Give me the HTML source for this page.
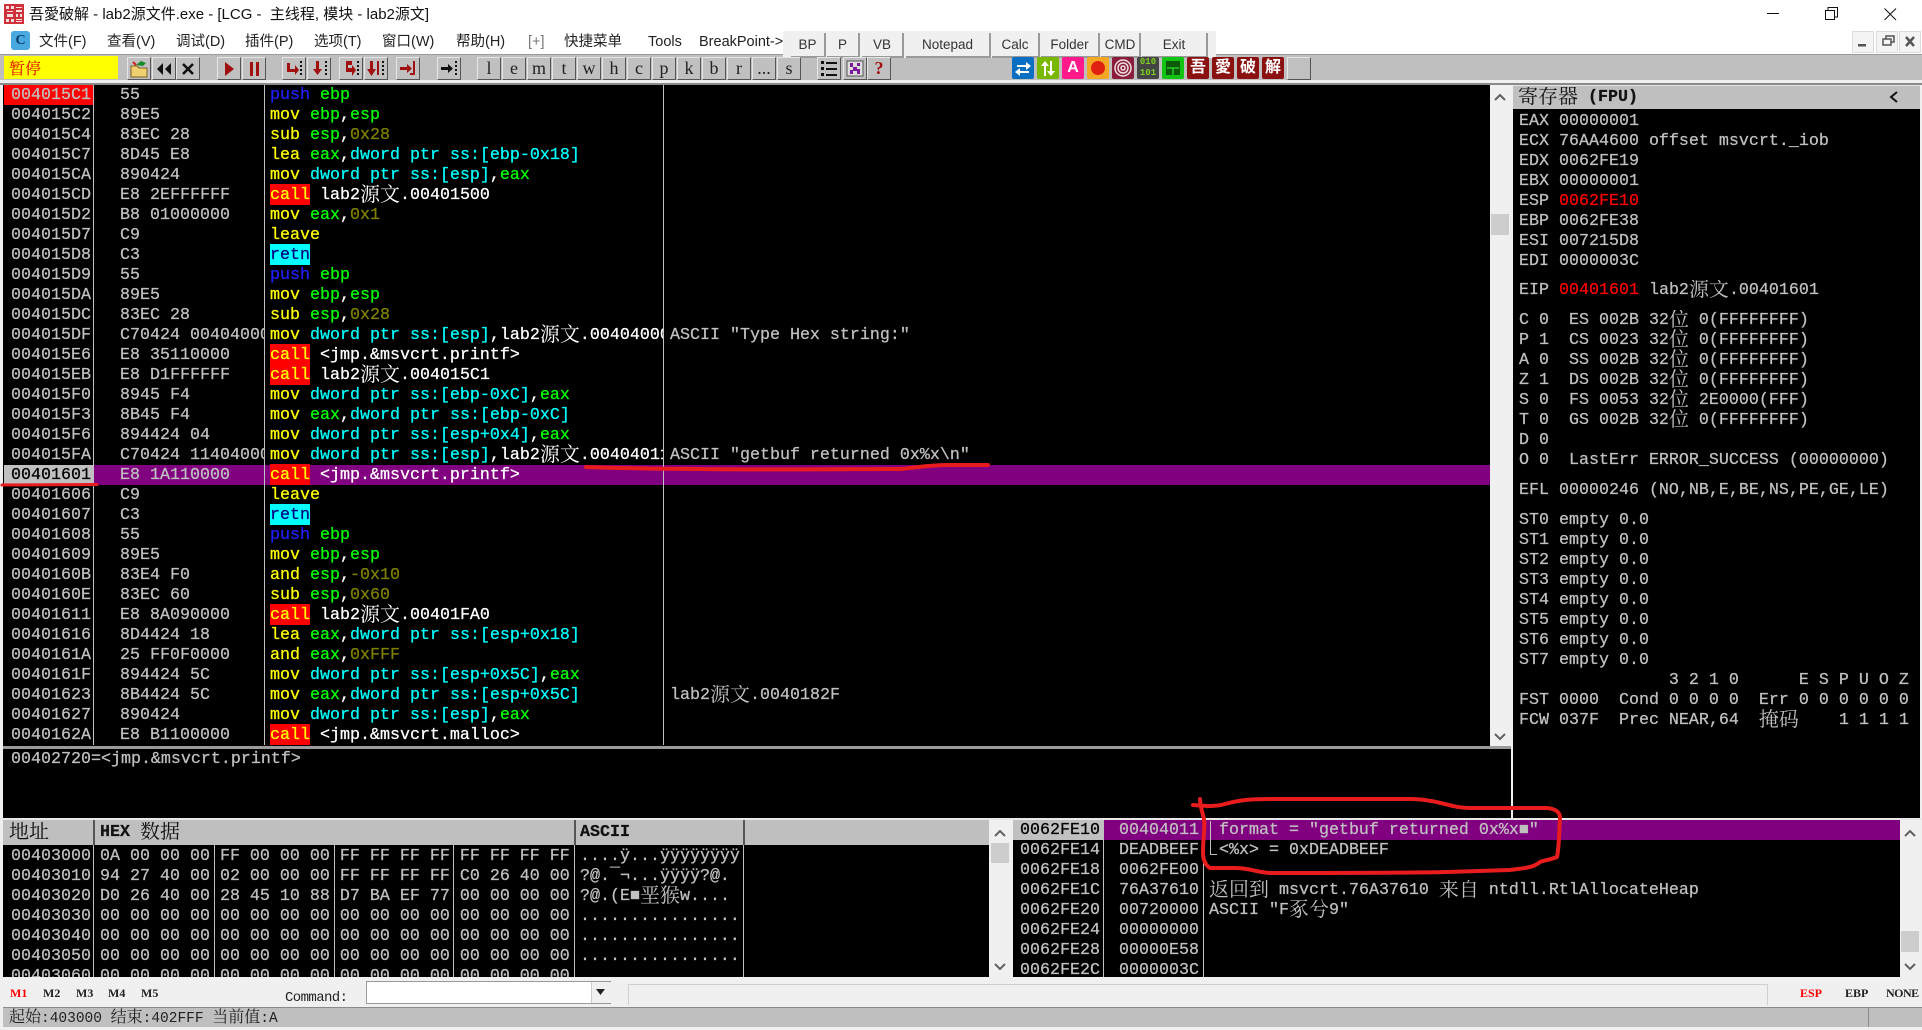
<!DOCTYPE html>
<html>
<head>
<meta charset="utf-8">
<style>
html,body{margin:0;padding:0;background:#f0f0f0;}
body{position:relative;width:1922px;height:1030px;overflow:hidden;font-family:"Liberation Sans","Noto Sans CJK SC",sans-serif;}
.a{position:absolute;}
.m{position:absolute;font-family:"Liberation Mono",monospace;font-size:16.67px;color:#c0c0c0;overflow:hidden;-webkit-text-stroke:.25px;}
.m div{height:20px;line-height:22px;white-space:pre;}
u{text-decoration:none;font-family:"Noto Serif CJK SC",serif;font-size:20px;line-height:0;font-weight:normal;-webkit-text-stroke:0;position:relative;top:2px;}
i{font-style:normal;}
.y{color:#ff0;}.g{color:#0f0;}.c{color:#0ff;}.o{color:#808000;}.w{color:#fff;}.b{color:#2020ff;}.r{color:#f00;}
.k{background:#f00;color:#ff0;box-shadow:0 -2px 0 #f00;}
.n{background:#0ff;color:#000080;box-shadow:0 -2px 0 #0ff;}
.t{position:absolute;top:32px;font-size:14.5px;line-height:20px;color:#222;white-space:nowrap;}
.bp{position:absolute;top:33px;height:23px;line-height:24px;background:#f0f0f0;border-right:2px solid #9a9a9a;border-bottom:2px solid #9a9a9a;text-align:center;font-size:13.5px;color:#333;}
.tb{position:absolute;top:57px;width:22px;height:21px;background:#c0c0c0;border-top:1px solid #e6e6e6;border-left:1px solid #e6e6e6;border-right:1px solid #555;border-bottom:1px solid #555;text-align:center;font-family:"Liberation Serif",serif;font-size:18px;line-height:20px;color:#222;overflow:hidden;}
.tb svg,.ic svg{position:absolute;left:0;top:0;}
.ic{position:absolute;top:57px;width:22px;height:22px;border-radius:2px;overflow:hidden;color:#fff;text-align:center;font-size:16px;line-height:22px;font-weight:bold;}
.vl{position:absolute;width:1px;background:#c0c0c0;}
.hd{position:absolute;background:#bfbfbf;}
.sb{position:absolute;background:#f0f0f0;}
.th{position:absolute;background:#cdcdcd;}
</style>
</head>
<body>
<!-- title bar -->
<div class="a" style="left:0;top:0;width:1922px;height:30px;background:#fff;"></div>
<svg class="a" style="left:4px;top:4px;" width="20" height="20"><rect width="20" height="20" fill="#d0303a"/><g fill="#fff" opacity=".85"><path d="M2 2h3v3H2zM7 2h3v3H7zM12 3h6v1h-6zM12 6h6v2h-6zM3 7h6v1H3zM3 10h6v3H3zM12 10h2v3h-2zM16 10h2v3h-2zM2 15h3v3H2zM7 15h3v3H7zM12 15h6v1h-6zM12 17h6v1h-6z"/></g></svg>
<div class="a" style="left:29px;top:5px;font-size:15px;line-height:20px;color:#111;white-space:nowrap;">吾愛破解 - lab2源文件.exe - [LCG -&nbsp; 主线程, 模块 - lab2源文]</div>
<svg class="a" style="left:1760px;top:4px;" width="150" height="20" fill="none" stroke="#111" stroke-width="1"><path d="M7 9.500H19"/><rect x="65.500" y="6.500" width="9" height="9"/><path d="M68 6V3.500H77.500V13H75"/><path d="M124.500 4.500L136 16M136 4.500L124.500 16"/></svg>
<!-- menu -->
<div class="a" style="left:0;top:30px;width:1922px;height:25px;background:#fff;"></div>
<div class="a" style="left:11px;top:31px;width:19px;height:19px;background:#4aa8e0;border-radius:3px;color:#0b3a66;font:bold 14px/19px 'Liberation Serif',serif;text-align:center;">C</div>
<div class="t" style="left:39px;">文件(F)</div>
<div class="t" style="left:107px;">查看(V)</div>
<div class="t" style="left:176px;">调试(D)</div>
<div class="t" style="left:245px;">插件(P)</div>
<div class="t" style="left:314px;">选项(T)</div>
<div class="t" style="left:382px;">窗口(W)</div>
<div class="t" style="left:456px;">帮助(H)</div>
<div class="t" style="left:528px;color:#777;">[+]</div>
<div class="t" style="left:564px;">快捷菜单</div>
<div class="t" style="left:648px;">Tools</div>
<div class="t" style="left:699px;">BreakPoint-&gt;</div>
<!-- toolbar -->
<div class="a" style="left:0;top:54px;width:1922px;height:26px;background:#bfbfbf;border-top:1px solid #9a9a9a;box-sizing:border-box;"></div>
<div class="a" style="left:783px;top:31px;width:433px;height:27px;background:#f0f0f0;"></div>
<div class="bp" style="left:791px;width:33px;">BP</div>
<div class="bp" style="left:827px;width:31px;">P</div>
<div class="bp" style="left:862px;width:40px;">VB</div>
<div class="bp" style="left:906px;width:83px;">Notepad</div>
<div class="bp" style="left:992px;width:46px;">Calc</div>
<div class="bp" style="left:1041px;width:57px;">Folder</div>
<div class="bp" style="left:1101px;width:38px;">CMD</div>
<div class="bp" style="left:1142px;width:64px;">Exit</div>
<svg class="a" style="left:1845px;top:31px;" width="77" height="22"><g fill="#f4f4f4" stroke="#dcdcdc"><rect x="7.500" y=".5" width="21" height="21"/><rect x="31.500" y=".5" width="21" height="21"/><rect x="54.500" y=".5" width="21" height="21"/></g><rect x="13" y="13" width="8" height="2.500" fill="#555"/><path d="M38 8h8v6h-8zM41 8V5h8v6h-3" fill="none" stroke="#555" stroke-width="1.500"/><path d="M61 6l8 9M69 6l-8 9" stroke="#555" stroke-width="2.500"/></svg>
<div class="a" style="left:4px;top:56px;width:114px;height:23px;background:#ff0;color:#e00000;font:16px/23px 'Noto Serif CJK SC',serif;text-indent:5px;">暂停</div>

<div class="tb" style="left:127px;"><svg width="22" height="21"><path d="M3 8h6l2 2h8v9H3z" fill="#f0d070" stroke="#7a6020"/><path d="M8 7l5-4 5 2-3 3z" fill="#1a8a2a"/><path d="M5 4l3 3" stroke="#d02020" stroke-width="2"/></svg></div>
<div class="tb" style="left:152px;"><svg width="22" height="21"><path d="M10 5L4 11l6 6zM18 5l-6 6 6 6z" fill="#111"/></svg></div>
<div class="tb" style="left:176px;"><svg width="22" height="21"><path d="M6 6l10 10M16 6L6 16" stroke="#111" stroke-width="2.600"/></svg></div>
<div class="tb" style="left:217px;"><svg width="22" height="21"><path d="M7 4l9 7-9 7z" fill="#a01010"/></svg></div>
<div class="tb" style="left:242px;"><svg width="22" height="21"><path d="M7 4h3v14H7zM13 4h3v14h-3z" fill="#a01010"/></svg></div>
<div class="tb" style="left:282px;"><svg width="22" height="21"><path d="M4 5h3v6h5V7l4 5-4 5v-3H4z" fill="#a01010"/><path d="M18 3v2M18 7v2M18 11v2M18 15v2" stroke="#111" stroke-width="2"/></svg></div>
<div class="tb" style="left:307px;"><svg width="22" height="21"><path d="M8 3h3v8h3l-4.500 6L5 11h3z" fill="#a01010"/><path d="M18 3v2M18 7v2M18 11v2M18 15v2" stroke="#111" stroke-width="2"/></svg></div>
<div class="tb" style="left:339px;"><svg width="22" height="21"><path d="M6 3h6v4H8v3h4V7l4 5-4 6v-4H6z" fill="#a01010"/><path d="M18 3v2M18 7v2M18 11v2M18 15v2" stroke="#111" stroke-width="2"/></svg></div>
<div class="tb" style="left:364px;"><svg width="22" height="21"><path d="M5 3h3v8h3l-4.500 7L2 11h3zM12 3h2v14h-2z" fill="#a01010"/><path d="M18 3v2M18 7v2M18 11v2M18 15v2" stroke="#111" stroke-width="2"/></svg></div>
<div class="tb" style="left:396px;"><svg width="22" height="21"><path d="M3 9h7V6l5 4.500-5 4.500v-3H3z" fill="#a01010"/><path d="M17 3v13h-4" stroke="#a01010" stroke-width="2" fill="none"/></svg></div>
<div class="tb" style="left:437px;"><svg width="22" height="21"><path d="M3 9h7V6l5 4.500-5 4.500v-3H3z" fill="#111"/><path d="M18 3v2M18 7v2M18 11v2M18 15v2" stroke="#111" stroke-width="2"/></svg></div>
<div class="tb" style="left:477px;">l</div>
<div class="tb" style="left:502px;">e</div>
<div class="tb" style="left:527px;">m</div>
<div class="tb" style="left:552px;">t</div>
<div class="tb" style="left:577px;">w</div>
<div class="tb" style="left:602px;">h</div>
<div class="tb" style="left:627px;">c</div>
<div class="tb" style="left:652px;">p</div>
<div class="tb" style="left:677px;">k</div>
<div class="tb" style="left:702px;">b</div>
<div class="tb" style="left:727px;">r</div>
<div class="tb" style="left:752px;">...</div>
<div class="tb" style="left:777px;">s</div>
<div class="tb" style="left:817px;"><svg width="22" height="21"><path d="M3 3h3v3H3zM3 9h3v3H3zM3 15h3v3H3zM8 4h11v2H8zM8 10h11v2H8zM8 16h11v2H8z" fill="#111"/></svg></div>
<div class="tb" style="left:843px;"><svg width="22" height="21"><rect x="3" y="3" width="16" height="15" fill="#ddd" stroke="#555"/><path d="M6 5h3v4h4V5h3v3h-3v3h3v5h-3v-3H9v3H6v-4h3V9H6z" fill="#7a1a9a"/></svg></div>
<div class="tb" style="left:867px;color:#a01010;font-weight:bold;">?</div>

<div class="ic" style="left:1012px;background:#0a6fc2;"><svg width="22" height="22"><path d="M5 8h9V5l5 4-5 4v-3H5zM17 14H8v-3l-5 4 5 4v-3h9z" fill="#fff"/></svg></div>
<div class="ic" style="left:1037px;background:#7ab800;"><svg width="22" height="22"><path d="M7 19V9H4l4-5 4 5H9v10zM15 4v10h3l-4 5-4-5h3V4z" fill="#fff"/></svg></div>
<div class="ic" style="left:1062px;background:#ff1a8c;">A</div>
<div class="ic" style="left:1087px;background:#f5a623;"><svg width="22" height="22"><circle cx="11" cy="11" r="7" fill="#e02010"/></svg></div>
<div class="ic" style="left:1112px;background:#8a1c3c;"><svg width="22" height="22" fill="none" stroke="#f0e0e0" stroke-width="1.500"><circle cx="11" cy="11" r="8"/><circle cx="11" cy="11" r="5"/><circle cx="11" cy="11" r="2"/></svg></div>
<div class="ic" style="left:1137px;background:#444;color:#7dd020;font:bold 9px/11px 'Liberation Mono',monospace;">010<br>101</div>
<div class="ic" style="left:1162px;background:#11c411;"><svg width="22" height="22"><rect x="4" y="4" width="14" height="14" fill="#0a5a0a"/><path d="M5 11h12M11 11v7" stroke="#3f3"/></svg></div>
<div class="ic" style="left:1187px;background:#8b1010;">吾</div>
<div class="ic" style="left:1212px;background:#8b1010;">愛</div>
<div class="ic" style="left:1237px;background:#8b1010;">破</div>
<div class="ic" style="left:1262px;background:#8b1010;">解</div>
<div class="tb" style="left:1287px;"></div>

<!-- panel background strip -->
<div class="a" style="left:0;top:80px;width:1922px;height:3px;background:#f0f0f0;"></div>
<div class="a" style="left:0;top:83px;width:1922px;height:2px;background:#8a8a8a;"></div>

<!-- disassembly -->
<div class="a" style="left:3px;top:85px;width:1487px;height:664px;background:#000;"></div>
<div class="a" style="left:4px;top:85px;width:89px;height:20px;background:#f00;"></div>
<div class="a" style="left:93px;top:465px;width:1397px;height:20px;background:#800080;"></div>
<div class="a" style="left:4px;top:465px;width:89px;height:20px;background:#c0c0c0;"></div>
<div class="vl" style="left:93px;top:85px;height:660px;"></div>
<div class="vl" style="left:264px;top:85px;height:660px;"></div>
<div class="vl" style="left:663px;top:85px;height:660px;"></div>

<div class="m" style="left:11px;top:85px;width:82px;height:660px;">
<div>004015C1</div><div>004015C2</div><div>004015C4</div><div>004015C7</div><div>004015CA</div><div>004015CD</div><div>004015D2</div><div>004015D7</div><div>004015D8</div><div>004015D9</div><div>004015DA</div><div>004015DC</div><div>004015DF</div><div>004015E6</div><div>004015EB</div><div>004015F0</div><div>004015F3</div><div>004015F6</div><div>004015FA</div><div style="color:#000;">00401601</div><div>00401606</div><div>00401607</div><div>00401608</div><div>00401609</div><div>0040160B</div><div>0040160E</div><div>00401611</div><div>00401616</div><div>0040161A</div><div>0040161F</div><div>00401623</div><div>00401627</div><div>0040162A</div>
</div>
<div class="m" style="left:120px;top:85px;width:144px;height:660px;">
<div>55</div><div>89E5</div><div>83EC 28</div><div>8D45 E8</div><div>890424</div><div>E8 2EFFFFFF</div><div>B8 01000000</div><div>C9</div><div>C3</div><div>55</div><div>89E5</div><div>83EC 28</div><div>C70424 00404000</div><div>E8 35110000</div><div>E8 D1FFFFFF</div><div>8945 F4</div><div>8B45 F4</div><div>894424 04</div><div>C70424 11404000</div><div>E8 1A110000</div><div>C9</div><div>C3</div><div>55</div><div>89E5</div><div>83E4 F0</div><div>83EC 60</div><div>E8 8A090000</div><div>8D4424 18</div><div>25 FF0F0000</div><div>894424 5C</div><div>8B4424 5C</div><div>890424</div><div>E8 B1100000</div>
</div>
<div class="m" style="left:270px;top:85px;width:393px;height:660px;">
<div><i class="b">push</i> <i class="g">ebp</i></div>
<div><i class="y">mov</i> <i class="g">ebp</i><i class="w">,</i><i class="g">esp</i></div>
<div><i class="y">sub</i> <i class="g">esp</i><i class="w">,</i><i class="o">0x28</i></div>
<div><i class="y">lea</i> <i class="g">eax</i><i class="w">,</i><i class="c">dword ptr ss:[ebp-0x18]</i></div>
<div><i class="y">mov</i> <i class="c">dword ptr ss:[esp]</i><i class="w">,</i><i class="g">eax</i></div>
<div><i class="k">call</i> <i class="w">lab2<u>源文</u>.00401500</i></div>
<div><i class="y">mov</i> <i class="g">eax</i><i class="w">,</i><i class="o">0x1</i></div>
<div><i class="y">leave</i></div>
<div><i class="n">retn</i></div>
<div><i class="b">push</i> <i class="g">ebp</i></div>
<div><i class="y">mov</i> <i class="g">ebp</i><i class="w">,</i><i class="g">esp</i></div>
<div><i class="y">sub</i> <i class="g">esp</i><i class="w">,</i><i class="o">0x28</i></div>
<div><i class="y">mov</i> <i class="c">dword ptr ss:[esp]</i><i class="w">,lab2<u>源文</u>.00404000</i></div>
<div><i class="k">call</i> <i class="w">&lt;jmp.&amp;msvcrt.printf&gt;</i></div>
<div><i class="k">call</i> <i class="w">lab2<u>源文</u>.004015C1</i></div>
<div><i class="y">mov</i> <i class="c">dword ptr ss:[ebp-0xC]</i><i class="w">,</i><i class="g">eax</i></div>
<div><i class="y">mov</i> <i class="g">eax</i><i class="w">,</i><i class="c">dword ptr ss:[ebp-0xC]</i></div>
<div><i class="y">mov</i> <i class="c">dword ptr ss:[esp+0x4]</i><i class="w">,</i><i class="g">eax</i></div>
<div><i class="y">mov</i> <i class="c">dword ptr ss:[esp]</i><i class="w">,lab2<u>源文</u>.00404011</i></div>
<div><i class="k">call</i> <i class="w">&lt;jmp.&amp;msvcrt.printf&gt;</i></div>
<div><i class="y">leave</i></div>
<div><i class="n">retn</i></div>
<div><i class="b">push</i> <i class="g">ebp</i></div>
<div><i class="y">mov</i> <i class="g">ebp</i><i class="w">,</i><i class="g">esp</i></div>
<div><i class="y">and</i> <i class="g">esp</i><i class="w">,</i><i class="o">-0x10</i></div>
<div><i class="y">sub</i> <i class="g">esp</i><i class="w">,</i><i class="o">0x60</i></div>
<div><i class="k">call</i> <i class="w">lab2<u>源文</u>.00401FA0</i></div>
<div><i class="y">lea</i> <i class="g">eax</i><i class="w">,</i><i class="c">dword ptr ss:[esp+0x18]</i></div>
<div><i class="y">and</i> <i class="g">eax</i><i class="w">,</i><i class="o">0xFFF</i></div>
<div><i class="y">mov</i> <i class="c">dword ptr ss:[esp+0x5C]</i><i class="w">,</i><i class="g">eax</i></div>
<div><i class="y">mov</i> <i class="g">eax</i><i class="w">,</i><i class="c">dword ptr ss:[esp+0x5C]</i></div>
<div><i class="y">mov</i> <i class="c">dword ptr ss:[esp]</i><i class="w">,</i><i class="g">eax</i></div>
<div><i class="k">call</i> <i class="w">&lt;jmp.&amp;msvcrt.malloc&gt;</i></div>
</div>
<div class="m" style="left:670px;top:325px;width:600px;height:20px;"><div>ASCII "Type Hex string:"</div></div>
<div class="m" style="left:670px;top:445px;width:600px;height:20px;"><div>ASCII "getbuf returned 0x%x\n"</div></div>
<div class="m" style="left:670px;top:685px;width:600px;height:24px;"><div>lab2<u>源文</u>.0040182F</div></div>

<!-- disasm scrollbar -->
<div class="sb" style="left:1490px;top:85px;width:22px;height:664px;"></div>
<svg class="a" style="left:1492px;top:90px;" width="16" height="14" fill="none" stroke="#606060" stroke-width="2"><path d="M3 10l5-5 5 5"/></svg>
<div class="th" style="left:1491px;top:214px;width:18px;height:21px;"></div>
<svg class="a" style="left:1492px;top:730px;" width="16" height="14" fill="none" stroke="#606060" stroke-width="2"><path d="M3 4l5 5 5-5"/></svg>

<!-- info pane -->
<div class="a" style="left:3px;top:746px;width:1508px;height:3px;background:#9a9a9a;"></div>
<div class="a" style="left:3px;top:749px;width:1508px;height:69px;background:#000;"></div>
<div class="m" style="left:11px;top:749px;width:600px;height:20px;"><div>00402720=&lt;jmp.&amp;msvcrt.printf&gt;</div></div>

<!-- registers -->
<div class="hd" style="left:1513px;top:85px;width:407px;height:24px;border-top:1px solid #e4e4e4;box-sizing:border-box;"></div>
<div class="m" style="left:1518px;top:87px;width:200px;height:22px;color:#111;"><div><u>寄存器</u> <b>(FPU)</b></div></div>
<svg class="a" style="left:1888px;top:90px;" width="12" height="14" fill="none" stroke="#111" stroke-width="2"><path d="M9 2L3 7l6 5"/></svg>
<div class="a" style="left:1513px;top:109px;width:407px;height:709px;background:#000;"></div>
<div class="m" style="left:1519px;top:111px;width:400px;height:160px;">
<div>EAX 00000001</div>
<div>ECX 76AA4600 offset msvcrt._iob</div>
<div>EDX 0062FE19</div>
<div>EBX 00000001</div>
<div>ESP <i class="r">0062FE10</i></div>
<div>EBP 0062FE38</div>
<div>ESI 007215D8</div>
<div>EDI 0000003C</div>
</div>
<div class="m" style="left:1519px;top:280px;width:400px;height:24px;"><div>EIP <i class="r">00401601</i> lab2<u>源文</u>.00401601</div></div>
<div class="m" style="left:1519px;top:310px;width:400px;height:160px;">
<div>C 0  ES 002B 32<u>位</u> 0(FFFFFFFF)</div>
<div>P 1  CS 0023 32<u>位</u> 0(FFFFFFFF)</div>
<div>A 0  SS 002B 32<u>位</u> 0(FFFFFFFF)</div>
<div>Z 1  DS 002B 32<u>位</u> 0(FFFFFFFF)</div>
<div>S 0  FS 0053 32<u>位</u> 2E0000(FFF)</div>
<div>T 0  GS 002B 32<u>位</u> 0(FFFFFFFF)</div>
<div>D 0</div>
<div>O 0  LastErr ERROR_SUCCESS (00000000)</div>
</div>
<div class="m" style="left:1519px;top:480px;width:400px;height:20px;"><div>EFL 00000246 (NO,NB,E,BE,NS,PE,GE,LE)</div></div>
<div class="m" style="left:1519px;top:510px;width:400px;height:224px;">
<div>ST0 empty 0.0</div>
<div>ST1 empty 0.0</div>
<div>ST2 empty 0.0</div>
<div>ST3 empty 0.0</div>
<div>ST4 empty 0.0</div>
<div>ST5 empty 0.0</div>
<div>ST6 empty 0.0</div>
<div>ST7 empty 0.0</div>
<div>               3 2 1 0      E S P U O Z</div>
<div>FST 0000  Cond 0 0 0 0  Err 0 0 0 0 0 0</div>
<div>FCW 037F  Prec NEAR,64  <u>掩码</u>    1 1 1 1</div>
</div>

<!-- dump -->
<div class="a" style="left:0;top:818px;width:1922px;height:2px;background:#e8e8e8;"></div>
<div class="hd" style="left:3px;top:820px;width:986px;height:25px;"></div>
<div class="a" style="left:93px;top:820px;width:2px;height:25px;background:#555;"></div>
<div class="a" style="left:574px;top:820px;width:2px;height:25px;background:#555;"></div>
<div class="a" style="left:743px;top:820px;width:2px;height:25px;background:#555;"></div>
<div class="m" style="left:9px;top:822px;width:80px;height:23px;color:#111;"><div><u>地址</u></div></div>
<div class="m" style="left:100px;top:822px;width:300px;height:23px;color:#111;"><div><b>HEX</b> <u>数据</u></div></div>
<div class="m" style="left:580px;top:822px;width:100px;height:22px;color:#111;"><div><b>ASCII</b></div></div>
<div class="a" style="left:3px;top:845px;width:986px;height:132px;background:#000;"></div>
<div class="vl" style="left:93px;top:845px;height:132px;"></div>
<div class="vl" style="left:214px;top:845px;height:132px;"></div>
<div class="vl" style="left:334px;top:845px;height:132px;"></div>
<div class="vl" style="left:453px;top:845px;height:132px;"></div>
<div class="vl" style="left:574px;top:845px;height:132px;"></div>
<div class="vl" style="left:743px;top:845px;height:132px;"></div>
<div class="m" style="left:11px;top:846px;width:82px;height:131px;"><div>00403000</div><div>00403010</div><div>00403020</div><div>00403030</div><div>00403040</div><div>00403050</div><div>00403060</div></div>
<div class="m" style="left:100px;top:846px;width:474px;height:131px;">
<div>0A 00 00 00 FF 00 00 00 FF FF FF FF FF FF FF FF</div>
<div>94 27 40 00 02 00 00 00 FF FF FF FF C0 26 40 00</div>
<div>D0 26 40 00 28 45 10 88 D7 BA EF 77 00 00 00 00</div>
<div>00 00 00 00 00 00 00 00 00 00 00 00 00 00 00 00</div>
<div>00 00 00 00 00 00 00 00 00 00 00 00 00 00 00 00</div>
<div>00 00 00 00 00 00 00 00 00 00 00 00 00 00 00 00</div>
<div>00 00 00 00 00 00 00 00 00 00 00 00 00 00 00 00</div>
</div>
<div class="m" style="left:580px;top:846px;width:163px;height:131px;">
<div>....ÿ...ÿÿÿÿÿÿÿÿ</div>
<div>?@.¯¬...ÿÿÿÿ?@.</div>
<div>?@.(E■<u>垩猴</u>w....</div>
<div>................</div>
<div>................</div>
<div>................</div>
</div>
<div class="sb" style="left:990px;top:820px;width:22px;height:157px;"></div>
<svg class="a" style="left:992px;top:826px;" width="16" height="14" fill="none" stroke="#606060" stroke-width="2"><path d="M3 10l5-5 5 5"/></svg>
<div class="th" style="left:991px;top:843px;width:18px;height:20px;"></div>
<svg class="a" style="left:992px;top:960px;" width="16" height="14" fill="none" stroke="#606060" stroke-width="2"><path d="M3 4l5 5 5-5"/></svg>

<!-- stack -->
<div class="a" style="left:1013px;top:820px;width:887px;height:157px;background:#000;"></div>
<div class="a" style="left:1103px;top:820px;width:797px;height:20px;background:#800080;"></div>
<div class="a" style="left:1013px;top:820px;width:90px;height:20px;background:#c0c0c0;"></div>
<div class="vl" style="left:1103px;top:820px;height:157px;"></div>
<div class="vl" style="left:1203px;top:820px;height:157px;"></div>
<div class="m" style="left:1020px;top:820px;width:83px;height:157px;">
<div style="color:#000;">0062FE10</div><div>0062FE14</div><div>0062FE18</div><div>0062FE1C</div><div>0062FE20</div><div>0062FE24</div><div>0062FE28</div><div>0062FE2C</div>
</div>
<div class="m" style="left:1119px;top:820px;width:84px;height:157px;">
<div>00404011</div><div>DEADBEEF</div><div>0062FE00</div><div>76A37610</div><div>00720000</div><div>00000000</div><div>00000E58</div><div>0000003C</div>
</div>
<div class="m" style="left:1219px;top:820px;width:600px;height:40px;">
<div>format = "getbuf returned 0x%x■"</div>
<div>&lt;%x&gt; = 0xDEADBEEF</div>
</div>
<div class="a" style="left:1210px;top:821px;width:1px;height:33px;background:#c0c0c0;"></div>
<div class="a" style="left:1210px;top:854px;width:7px;height:1px;background:#c0c0c0;"></div>
<div class="m" style="left:1209px;top:880px;width:680px;height:44px;">
<div><u>返回到</u> msvcrt.76A37610 <u>来自</u> ntdll.RtlAllocateHeap</div>
<div>ASCII "F<u>豖兮</u>9"</div>
</div>
<div class="sb" style="left:1900px;top:820px;width:20px;height:157px;"></div>
<svg class="a" style="left:1902px;top:826px;" width="16" height="14" fill="none" stroke="#606060" stroke-width="2"><path d="M3 10l5-5 5 5"/></svg>
<div class="th" style="left:1901px;top:931px;width:18px;height:21px;"></div>
<svg class="a" style="left:1902px;top:960px;" width="16" height="14" fill="none" stroke="#606060" stroke-width="2"><path d="M3 4l5 5 5-5"/></svg>

<!-- bottom bar -->
<div class="a" style="left:10px;top:985px;font:bold 12px/16px 'Liberation Serif',serif;color:#f00;">M1</div>
<div class="a" style="left:43px;top:985px;font:bold 12px/16px 'Liberation Serif',serif;color:#222;">M2</div>
<div class="a" style="left:76px;top:985px;font:bold 12px/16px 'Liberation Serif',serif;color:#222;">M3</div>
<div class="a" style="left:108px;top:985px;font:bold 12px/16px 'Liberation Serif',serif;color:#222;">M4</div>
<div class="a" style="left:141px;top:985px;font:bold 12px/16px 'Liberation Serif',serif;color:#222;">M5</div>
<div class="a" style="left:285px;top:990px;font:14px/16px 'Liberation Mono',monospace;color:#222;letter-spacing:-.6px;">Command:</div>
<div class="a" style="left:366px;top:981px;width:245px;height:23px;background:#fff;border:1px solid #9a9a9a;border-right:2px solid #888;box-sizing:border-box;"></div>
<div class="a" style="left:591px;top:982px;width:19px;height:21px;background:#f0f0f0;border-left:1px solid #ccc;"></div>
<svg class="a" style="left:595px;top:988px;" width="12" height="8"><path d="M1 1h9L5.500 7z" fill="#222"/></svg>
<div class="a" style="left:628px;top:984px;width:1140px;height:21px;background:#f0f0f0;border:1px solid #d0d0d0;border-bottom:0;box-sizing:border-box;"></div>
<div class="a" style="left:1800px;top:985px;font:bold 12px/16px 'Liberation Serif',serif;color:#f00;">ESP</div>
<div class="a" style="left:1845px;top:985px;font:bold 12px/16px 'Liberation Serif',serif;color:#222;">EBP</div>
<div class="a" style="left:1886px;top:985px;font:bold 12px/16px 'Liberation Serif',serif;color:#222;letter-spacing:-.5px;">NONE</div>

<!-- status -->
<div class="a" style="left:3px;top:1007px;width:1919px;height:20px;background:#bfbfbf;border-top:1px solid #8a8a8a;box-sizing:border-box;"></div>
<div class="a" style="left:1868px;top:1007px;width:1px;height:20px;background:#8a8a8a;"></div>
<div class="a" style="left:9px;top:1008px;font:14.5px/20px 'Liberation Mono','Noto Serif CJK SC',monospace;color:#222;white-space:pre;"><span style="font-size:16px;">起始</span>:403000 <span style="font-size:16px;">结束</span>:402FFF <span style="font-size:16px;">当前值</span>:A</div>

<!-- red annotations -->
<svg class="a" style="left:0;top:0;" width="1922" height="1030" fill="none" stroke="#e81c1c" stroke-linecap="round" stroke-linejoin="round">
<path d="M2 485L97 484.500" stroke-width="3"/>
<path d="M586 467C620 468 650 469 700 469C780 470 860 469 900 469C915 468 925 465 950 465L988 465" stroke-width="4"/>
<path d="M1193 805C1205 806 1215 807 1225 804C1240 800 1250 799 1270 799L1413 799C1440 800 1450 808 1470 808L1547 808C1556 809 1560 812 1560 818C1559 835 1559 848 1557 857C1550 860 1545 860 1540 862C1533 868 1525 868 1510 870L1447 872C1400 873 1320 873 1270 873C1255 872 1250 868 1235 868L1210 868C1205 865 1203 860 1203 852C1203 835 1206 825 1203 815C1201 808 1200 803 1200 799" stroke-width="4"/>
</svg>
</body>
</html>
